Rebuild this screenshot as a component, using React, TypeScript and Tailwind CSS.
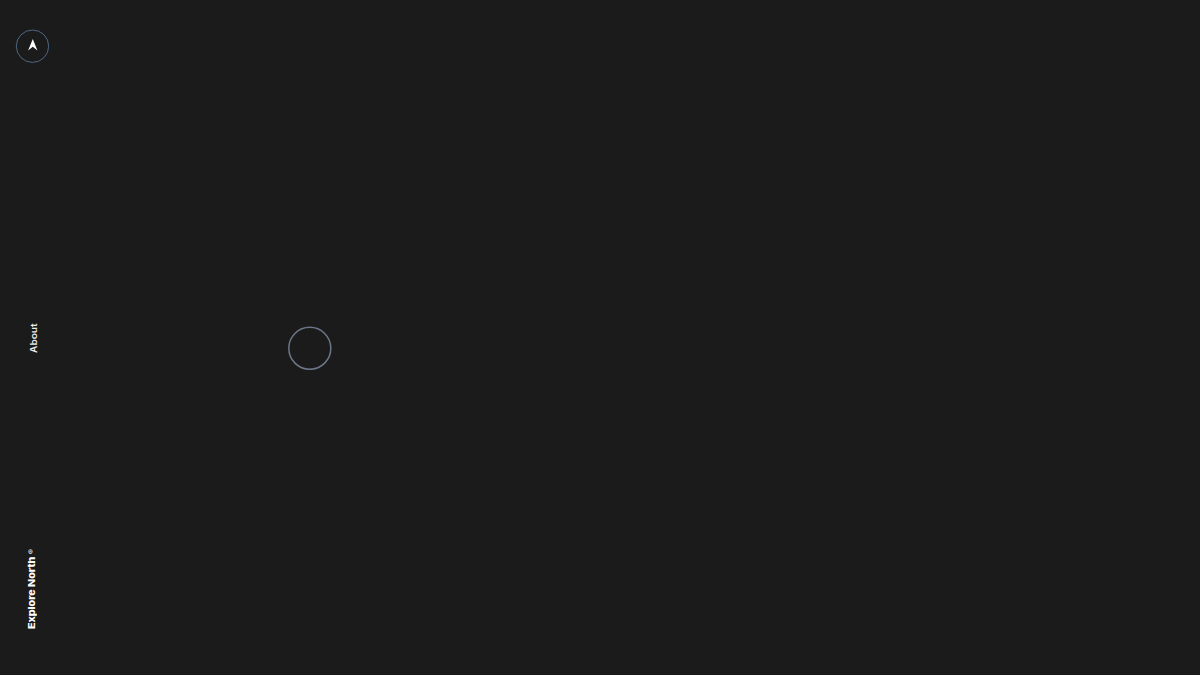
/**
 * Landing screen: dark canvas with a vertical navigation rail
 * and a ring that stands in for the pointer.
 */

function LogoMark() {
  return (
    <a href="#" aria-label="Home" className="block h-[34px] w-[34px]">
      <svg viewBox="0 0 34 34" className="h-full w-full" fill="none">
        <circle cx="17.5" cy="17.2" r="16.2" stroke="#536f8f" strokeWidth="0.9" />
        <path d="M17.8 10L22.4 21.4L17.8 17.8L13.1 21.4Z" fill="#ffffff" />
      </svg>
    </a>
  );
}

function SideRail() {
  return (
    <nav className="flex h-full w-16 flex-col items-center justify-between pt-[29px] pb-[50px]">
      <LogoMark />

      {/* Labels are stretched along the reading direction for wider letters */}
      <a
        href="#about"
        className="mt-[61px] ml-[3px] rotate-180 scale-y-[1.12] text-[9px] leading-3 font-semibold text-[#ececec] [writing-mode:vertical-rl]"
      >
        About
      </a>

      <span className="rotate-180 scale-y-[1.12] text-[9.5px] leading-3 font-extrabold text-white [writing-mode:vertical-rl]">
        Explore North
        <span className="relative left-px inline-block text-[7px] leading-none font-semibold">®</span>
      </span>
    </nav>
  );
}

function CursorRing() {
  return (
    <div className="pointer-events-none absolute top-[326px] left-[288px] h-[44px] w-[44px]">
      <svg viewBox="0 0 44 44" className="h-full w-full" fill="none">
        <circle cx="21.8" cy="22.3" r="21" stroke="#6c7689" strokeWidth="1.5" />
      </svg>
    </div>
  );
}

export default function App() {
  return (
    <div className="relative flex h-screen w-full overflow-hidden bg-[#1b1b1b] font-['Inter',sans-serif]">
      <SideRail />
      <main className="flex-1" />
      <CursorRing />
    </div>
  );
}
